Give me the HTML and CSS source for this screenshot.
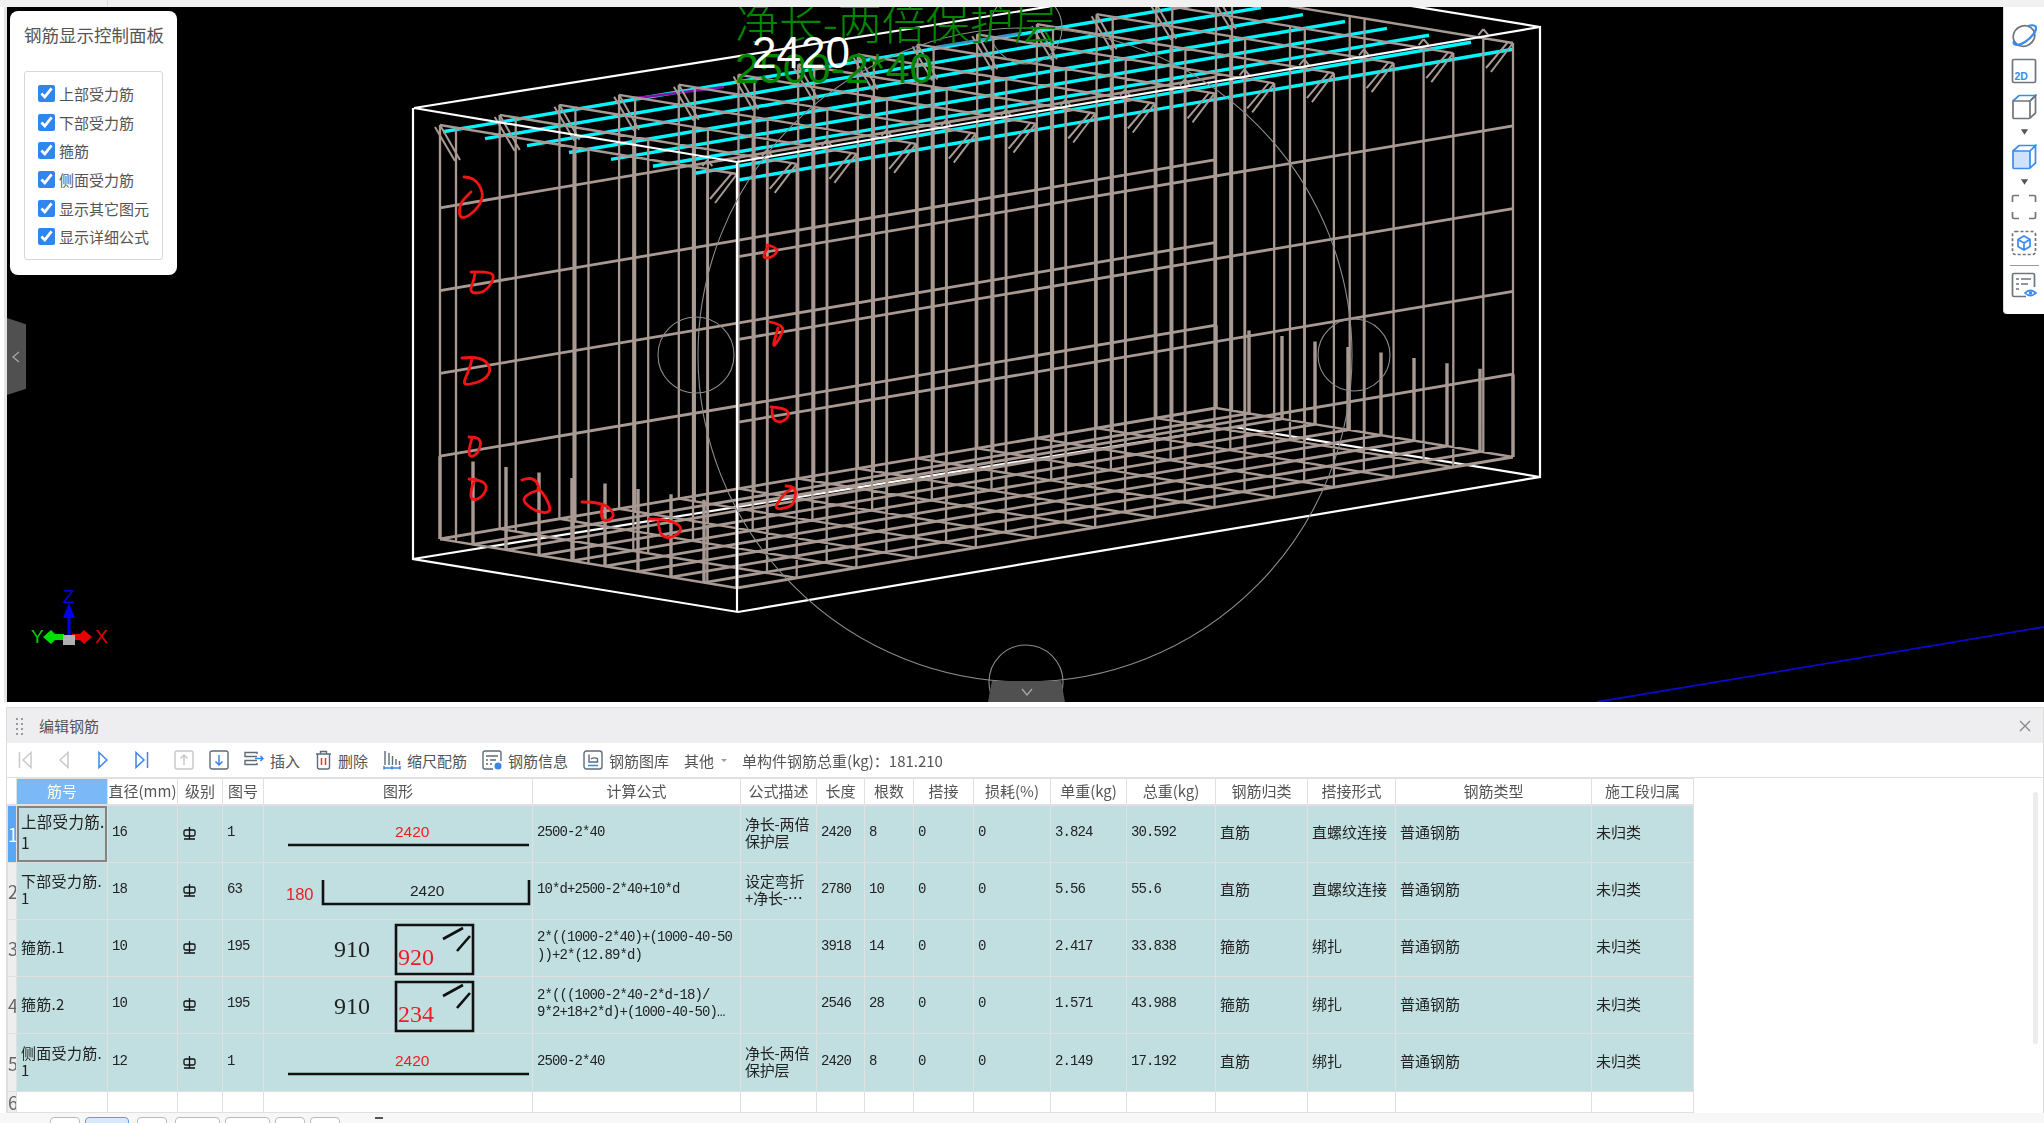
FILE: index.html
```html
<!DOCTYPE html>
<html lang="zh-CN">
<head>
<meta charset="utf-8">
<title>编辑钢筋</title>
<link rel="stylesheet" href="styles.css">
</head>
<body>
<div class="page">
  <div class="top-strip"><div class="top-tab"></div></div>

  <div class="stage">
    <div class="gutter"></div>
    <main class="viewport">
      <svg class="scene" viewBox="7 7 2037 695" width="2037" height="695" aria-label="钢筋三维视图">
        <line class="axis-blue" x1="1597" y1="702" x2="2044" y2="627"/>
        <path class="box-line" d="M414 108 1234 -23M1540 27 1234 -23M413 559 1234 427 1540 477"/>
        <g id="cyan-bars"></g>
        <path class="misc-purple" d="M637 98 724 87"/>
        <path class="misc-blue" d="M936 47 1022 33"/>
        <g id="rebar"></g>
        <path class="box-line" d="M414 108 737 162 1540 27V477L738 612 413 559V108M737 162V612"/>
        <g class="orbit">
          <circle cx="1025" cy="355" r="327"/>
          <circle cx="1026" cy="28" r="36"/>
          <circle cx="696" cy="355" r="38"/>
          <circle cx="1354" cy="355" r="36"/>
          <circle cx="1026" cy="682" r="37"/>
        </g>
        <text class="dim-green" x="735" y="40">净长-两倍保护层</text>
        <text class="dim-green formula-3d" x="735" y="83">2500-2*40</text>
        <text class="dim-white" x="752" y="68">2420</text>
        <g class="scribble">
          <path d="M464 177 474 177 484 193 479 207 466 218 459 217 460 203 471 192"/>
          <path d="M471 272 492 271 494 280 484 293 469 293 474 280 475 272"/>
          <path d="M462 358 480 356 492 368 485 380 468 385 463 383 470 368 472 358"/>
          <path d="M767 245 780 248 772 258 762 258 768 247"/>
          <path d="M770 322 785 325 780 338 772 349 778 328"/>
          <path d="M771 407 785 408 790 415 782 423 773 420 772 410"/>
          <path d="M469 437 481 437 480 450 472 458 468 453 472 438"/>
          <path d="M469 479 482 480 488 488 480 499 470 500 472 485 476 479"/>
          <path d="M522 480 533 476 541 490 531 492 521 500 536 512 552 513 546 497 538 488"/>
          <path d="M582 502 602 502 615 513 610 521 601 520 602 505"/>
          <path d="M649 519 668 519 684 528 673 538 661 537 658 522"/>
          <path d="M786 486 796 486 795 500 791 507 773 510 783 495 792 488"/>
        </g>
        <g class="gizmo">
          <text class="gz-z" x="63" y="603">Z</text>
          <path class="gz-zshaft" d="M69 618V640"/>
          <path class="gz-zcone" d="M69 603 75 618H63Z"/>
          <path class="gz-ycone" d="M43 637 51 630 55 634H64V640H55L51 644Z"/>
          <path class="gz-xcone" d="M92 637 84 630 80 634H72V640H80L84 644Z"/>
          <rect class="gz-core" x="63" y="635" width="12" height="10"/>
          <text class="gz-y" x="31" y="643">Y</text>
          <text class="gz-x" x="95" y="643">X</text>
        </g>
      </svg>

      <section class="control-panel">
        <h2 class="panel-title">钢筋显示控制面板</h2>
        <div class="check-group">
          <label class="check-row"><input type="checkbox" checked>上部受力筋</label>
          <label class="check-row"><input type="checkbox" checked>下部受力筋</label>
          <label class="check-row"><input type="checkbox" checked>箍筋</label>
          <label class="check-row"><input type="checkbox" checked>侧面受力筋</label>
          <label class="check-row"><input type="checkbox" checked>显示其它图元</label>
          <label class="check-row"><input type="checkbox" checked>显示详细公式</label>
        </div>
      </section>

      <div class="handle-left"><svg width="8" height="12" viewBox="0 0 8 12"><path class="chev" d="M7 1 1 6 7 11"/></svg></div>
      <div class="handle-bottom"><svg width="12" height="8" viewBox="0 0 12 8"><path class="chev" d="M1 1 6 7 11 1"/></svg></div>

      <aside class="view-tools">
        <svg class="vt-icon" viewBox="0 0 26 26"><ellipse class="i-gray" cx="13" cy="13" rx="11" ry="10" transform="rotate(-30 13 13)"/><path class="i-blue-thick" d="M3 18C1 23 8 23 14 19S26 8 25 4C24 2 20 2 17 3"/></svg>
        <svg class="vt-icon" viewBox="0 0 26 26"><rect class="i-gray" x="1.500" y="1.500" width="23" height="23" rx="1.500"/><text class="i-2d" x="3.500" y="22">2D</text></svg>
        <svg class="vt-icon" viewBox="0 0 26 26"><path class="i-blue" d="M2 7 8 1.500H24.500L19 7"/><path class="i-gray" d="M2 7H19V23C19 24 18.500 24.500 18 24.500H3C2.500 24.500 2 24 2 23ZM19 7 24.500 1.500V19L19 24"/></svg>
        <svg class="vt-caret" viewBox="0 0 10 6"><path d="M1 0H9L5 6Z"/></svg>
        <svg class="vt-icon" viewBox="0 0 26 26"><path class="i-fill" d="M2 7H19V24.500H3L2 23Z"/><path class="i-blue" d="M2 7 8 1.500H24.500L19 7M2 7H19V23C19 24 18.500 24.500 18 24.500H3C2.500 24.500 2 24 2 23ZM19 7 24.500 1.500V19L19 24"/></svg>
        <svg class="vt-caret" viewBox="0 0 10 6"><path d="M1 0H9L5 6Z"/></svg>
        <svg class="vt-icon" viewBox="0 0 26 26"><path class="i-gray" d="M8 1.500H3Q1.500 1.500 1.500 3V8M18 1.500H23Q24.500 1.500 24.500 3V8M1.500 18V23Q1.500 24.500 3 24.500H8M24.500 18V23Q24.500 24.500 23 24.500H18"/></svg>
        <svg class="vt-icon" viewBox="0 0 26 26"><rect class="i-dash" x="1.500" y="1.500" width="23" height="23" rx="3"/><path class="i-blue" d="M13 6 19 9.500V16.500L13 20 7 16.500V9.500ZM7 9.500 13 13 19 9.500M13 13V20"/></svg>
        <div class="vt-sep"></div>
        <svg class="vt-icon" viewBox="0 0 26 26"><path class="i-gray" d="M15 24.500H3Q1.500 24.500 1.500 23V3Q1.500 1.500 3 1.500H22Q23.500 1.500 23.500 3V15"/><path class="i-gray" d="M5 7H8M10 7H20M5 12H8M10 12H17M5 17H8"/><path class="i-blue" d="M14 21Q19 16 25 21 19 26 14 21Z"/><circle class="i-dot" cx="19.500" cy="21" r="1.800"/></svg>
      </aside>
    </main>
  </div>

  <section class="editor">
    <header class="editor-head">
      <svg class="grip" width="9" height="18" viewBox="0 0 9 18"><path d="M1 1h2v2H1zM6 1h2v2H6zM1 6h2v2H1zM6 6h2v2H6zM1 11h2v2H1zM6 11h2v2H6zM1 16h2v2H1zM6 16h2v2H6z"/></svg>
      <span class="editor-title">编辑钢筋</span>
      <svg class="close" width="12" height="12" viewBox="0 0 12 12"><path d="M1 1 11 11M11 1 1 11"/></svg>
    </header>

    <div class="toolbar">
      <span class="nav-btn"><svg width="14" height="18" viewBox="0 0 14 18"><path class="t-off" d="M1.500 1V17M13 1.500 5 9 13 16.500Z"/></svg></span>
      <span class="nav-btn"><svg width="10" height="18" viewBox="0 0 10 18"><path class="t-off" d="M9 1.500 1 9 9 16.500Z"/></svg></span>
      <span class="nav-btn"><svg width="10" height="18" viewBox="0 0 10 18"><path class="t-on" d="M1 1.500 9 9 1 16.500Z"/></svg></span>
      <span class="nav-btn"><svg width="14" height="18" viewBox="0 0 14 18"><path class="t-on" d="M1 1.500 9 9 1 16.500ZM12.500 1V17"/></svg></span>
      <span class="box-btn box-first"><svg width="20" height="20" viewBox="0 0 20 20"><rect class="t-off" x="1" y="1" width="18" height="18" rx="2"/><path class="t-off" d="M10 15V5M6.500 8.500 10 5 13.500 8.500"/></svg></span>
      <span class="box-btn"><svg width="20" height="20" viewBox="0 0 20 20"><rect class="t-dark" x="1" y="1" width="18" height="18" rx="2"/><path class="t-on" d="M10 5V15M6.500 11.500 10 15 13.500 11.500"/></svg></span>
      <span class="tool tool-first"><svg width="20" height="18" viewBox="0 0 20 18"><path class="t-dark" d="M13 3V1.500H1V5.500H13M13 12V13.500H1V9.500H13"/><path class="t-on" d="M11 7.500H19M16.500 5 19 7.500 16.500 10"/></svg>插入</span>
      <span class="tool"><svg width="17" height="20" viewBox="0 0 17 20"><path class="t-dark" d="M1 4H16M5.500 4V1.500H11.500V4M2.500 4V17Q2.500 19 4.500 19H12.500Q14.500 19 14.500 17V4"/><path class="t-red" d="M6.500 8V15M10.500 8V15"/></svg>删除</span>
      <span class="tool"><svg width="18" height="20" viewBox="0 0 18 20"><path class="t-dark" d="M2 1V15M6 3V15M9.500 6V15M13 9V15M16.500 11V15"/><path class="t-on" d="M1 18H17M1 16V19.500M17 16V19.500M9 16V19.500"/></svg>缩尺配筋</span>
      <span class="tool"><svg width="20" height="20" viewBox="0 0 20 20"><path class="t-dark" d="M11 19H3Q1 19 1 17V3Q1 1 3 1H17Q19 1 19 3V11M4 6H16M4 10H6M8 10H14M4 14H6M8 14H10"/><circle class="t-fill" cx="16" cy="16" r="3.500"/></svg>钢筋信息</span>
      <span class="tool"><svg width="20" height="20" viewBox="0 0 20 20"><rect class="t-dark" x="1" y="1" width="18" height="18" rx="2.500"/><path class="t-dark" d="M6 4.500V12H14.500V9C14.500 7.500 9.500 7.500 8 9"/><path class="t-on" d="M5 15.500H15"/></svg>钢筋图库</span>
      <span class="tool">其他<i class="mini-caret"></i></span>
      <span class="total">单构件钢筋总重(kg)：181.210</span>
    </div>

    <div class="grid-wrap">
      <table class="rebar-table">
        <colgroup>
          <col class="c-no"><col class="c-id"><col class="c-dia"><col class="c-grade"><col class="c-fig"><col class="c-shape"><col class="c-calc"><col class="c-desc"><col class="c-len"><col class="c-qty"><col class="c-lap"><col class="c-loss"><col class="c-unit"><col class="c-sum"><col class="c-cat"><col class="c-join"><col class="c-type"><col class="c-seg">
        </colgroup>
        <thead>
          <tr><th class="corner"></th><th class="sel-head">筋号</th><th>直径(mm)</th><th>级别</th><th>图号</th><th>图形</th><th>计算公式</th><th>公式描述</th><th>长度</th><th>根数</th><th>搭接</th><th>损耗(%)</th><th>单重(kg)</th><th>总重(kg)</th><th>钢筋归类</th><th>搭接形式</th><th>钢筋类型</th><th>施工段归属</th></tr>
        </thead>
        <tbody>
          <tr class="data">
            <td class="no no-active">1</td><td class="id id-active">上部受力筋.<br>1</td><td class="num">16</td>
            <td><svg class="grade" viewBox="0 0 13 13"><rect x="1" y="3" width="11" height="6" rx="1.500"/><path d="M6.500 0V12M1 12H12"/></svg></td>
            <td class="num">1</td>
            <td class="shape"><svg class="fig" viewBox="0 0 270 56"><text class="f-sans f-red" x="131" y="31">2420</text><path class="f-line" d="M24 39H265"/></svg></td>
            <td class="num">2500-2*40</td><td class="desc">净长-两倍<br>保护层</td><td class="num">2420</td><td class="num">8</td><td class="num">0</td><td class="num">0</td><td class="num">3.824</td><td class="num">30.592</td><td>直筋</td><td>直螺纹连接</td><td>普通钢筋</td><td>未归类</td>
          </tr>
          <tr class="data">
            <td class="no">2</td><td class="id">下部受力筋.<br>1</td><td class="num">18</td>
            <td><svg class="grade" viewBox="0 0 13 13"><rect x="1" y="3" width="11" height="6" rx="1.500"/><path d="M6.500 0V12M1 12H12"/></svg></td>
            <td class="num">63</td>
            <td class="shape"><svg class="fig" viewBox="0 0 270 56"><text class="f-sans f-red f-big" x="22" y="37">180</text><path class="f-line" d="M59 17V41H265V17"/><text class="f-sans" x="146" y="33">2420</text></svg></td>
            <td class="num">10*d+2500-2*40+10*d</td><td class="desc">设定弯折<br>+净长-…</td><td class="num">2780</td><td class="num">10</td><td class="num">0</td><td class="num">0</td><td class="num">5.56</td><td class="num">55.6</td><td>直筋</td><td>直螺纹连接</td><td>普通钢筋</td><td>未归类</td>
          </tr>
          <tr class="data">
            <td class="no">3</td><td class="id">箍筋.1</td><td class="num">10</td>
            <td><svg class="grade" viewBox="0 0 13 13"><rect x="1" y="3" width="11" height="6" rx="1.500"/><path d="M6.500 0V12M1 12H12"/></svg></td>
            <td class="num">195</td>
            <td class="shape"><svg class="fig" viewBox="0 0 270 56"><text class="f-serif" x="70" y="37">910</text><path class="f-line" d="M132 5H209V54H132ZM179 19 199 8M193 31 206 16"/><text class="f-serif f-red" x="134" y="45">920</text></svg></td>
            <td class="num">2*((1000-2*40)+(1000-40-50<br>))+2*(12.89*d)</td><td class="desc"></td><td class="num">3918</td><td class="num">14</td><td class="num">0</td><td class="num">0</td><td class="num">2.417</td><td class="num">33.838</td><td>箍筋</td><td>绑扎</td><td>普通钢筋</td><td>未归类</td>
          </tr>
          <tr class="data">
            <td class="no">4</td><td class="id">箍筋.2</td><td class="num">10</td>
            <td><svg class="grade" viewBox="0 0 13 13"><rect x="1" y="3" width="11" height="6" rx="1.500"/><path d="M6.500 0V12M1 12H12"/></svg></td>
            <td class="num">195</td>
            <td class="shape"><svg class="fig" viewBox="0 0 270 56"><text class="f-serif" x="70" y="37">910</text><path class="f-line" d="M132 5H209V54H132ZM179 19 199 8M193 31 206 16"/><text class="f-serif f-red" x="134" y="45">234</text></svg></td>
            <td class="num">2*(((1000-2*40-2*d-18)/<br>9*2+18+2*d)+(1000-40-50)…</td><td class="desc"></td><td class="num">2546</td><td class="num">28</td><td class="num">0</td><td class="num">0</td><td class="num">1.571</td><td class="num">43.988</td><td>箍筋</td><td>绑扎</td><td>普通钢筋</td><td>未归类</td>
          </tr>
          <tr class="data">
            <td class="no">5</td><td class="id">侧面受力筋.<br>1</td><td class="num">12</td>
            <td><svg class="grade" viewBox="0 0 13 13"><rect x="1" y="3" width="11" height="6" rx="1.500"/><path d="M6.500 0V12M1 12H12"/></svg></td>
            <td class="num">1</td>
            <td class="shape"><svg class="fig" viewBox="0 0 270 56"><text class="f-sans f-red" x="131" y="31">2420</text><path class="f-line" d="M24 39H265"/></svg></td>
            <td class="num">2500-2*40</td><td class="desc">净长-两倍<br>保护层</td><td class="num">2420</td><td class="num">8</td><td class="num">0</td><td class="num">0</td><td class="num">2.149</td><td class="num">17.192</td><td>直筋</td><td>绑扎</td><td>普通钢筋</td><td>未归类</td>
          </tr>
          <tr class="blank">
            <td class="no">6</td><td></td><td></td><td></td><td></td><td></td><td></td><td></td><td></td><td></td><td></td><td></td><td></td><td></td><td></td><td></td><td></td><td></td>
          </tr>
        </tbody>
      </table>
      <div class="v-scroll"></div>
    </div>
  </section>

  <nav class="pager">
    <span class="pg pg-s"></span>
    <span class="pg pg-active"></span>
    <span class="pg pg-s pg-wide"></span>
    <span class="pg pg-m pg-wide"></span>
    <span class="pg pg-m"></span>
    <span class="pg pg-s"></span>
    <span class="pg pg-s"></span>
    <i class="pg-mark"></i>
  </nav>
</div>
<script src="wireframe.js"></script>
</body>
</html>
```

FILE: styles.css
```css
* { box-sizing: border-box; }
html, body { margin: 0; padding: 0; background: #fff; }
body { font-family: "Noto Sans CJK SC", "Liberation Sans", sans-serif; color: #333; }

.page {
  width: 2044px;
  height: 1123px;
  overflow: hidden;
  display: flex;
  flex-direction: column;
  filter: blur(0.45px);
}

.top-strip { height: 7px; background: #f1f1f1; flex: none; }
.top-tab { width: 108px; height: 7px; border-right: 1px solid #ddd; }

.stage { display: flex; height: 695px; flex: none; }
.gutter { width: 7px; background: linear-gradient(90deg, #fff 0 4px, #e4e4e4 4px); }
.viewport { position: relative; flex: 1; background: #000; overflow: hidden; }
.scene { display: block; }

.box-line { fill: none; stroke: #fff; stroke-width: 2.200; }
.axis-blue { stroke: #0a0ac8; stroke-width: 1.800; }
.misc-purple { stroke: #8a10a8; stroke-width: 2.600; }
.misc-blue { stroke: #3f8fc8; stroke-width: 2.600; }
.orbit circle { fill: none; stroke: #8c8c8c; stroke-width: 1.100; }
.dim-green { fill: #008600; font-size: 44px; font-family: "Noto Sans CJK SC", sans-serif; font-weight: 300; }
.formula-3d { font-size: 43px; font-family: "Liberation Sans", sans-serif; font-weight: 400; }
.dim-white { fill: #fff; font-size: 44px; font-family: "Liberation Sans", sans-serif; }
.scribble path { fill: none; stroke: #f41414; stroke-width: 2.800; stroke-linejoin: round; stroke-linecap: round; }

.gizmo text { font-size: 19px; font-family: "Liberation Sans", sans-serif; }
.gz-z { fill: #0000e0; }
.gz-y { fill: #00d000; }
.gz-x { fill: #e00000; }
.gz-zshaft { stroke: #0000f0; stroke-width: 3; }
.gz-zcone { fill: #0000f0; }
.gz-ycone { fill: #00e000; }
.gz-xcone { fill: #e80000; }
.gz-core { fill: #b0b0b0; }

.control-panel {
  position: absolute;
  left: 3px;
  top: 4px;
  width: 167px;
  height: 264px;
  background: #fff;
  border-radius: 8px;
  padding: 11px 14px;
}
.panel-title {
  margin: 0 0 24px;
  font-size: 17.500px;
  font-weight: 400;
  line-height: 25px;
  color: #555;
  white-space: nowrap;
}
.check-group {
  width: 139px;
  height: 189px;
  border: 1px solid #d8d8d8;
  border-radius: 3px;
  padding: 7px 0 0 13px;
}
.check-row {
  display: flex;
  align-items: center;
  gap: 4px;
  height: 28.700px;
  font-size: 15px;
  color: #555;
  white-space: nowrap;
}
.check-row input {
  appearance: auto;
  accent-color: #2f86ee;
  width: 17px;
  height: 17px;
  margin: 0;
}

.handle-left {
  position: absolute;
  left: 0;
  top: 311px;
  width: 19px;
  height: 77px;
  background: #505050;
  clip-path: polygon(0 0, 100% 8%, 100% 92%, 0 100%);
  display: flex;
  align-items: center;
  padding-left: 5px;
}
.handle-bottom {
  position: absolute;
  left: 981px;
  top: 674px;
  width: 77px;
  height: 21px;
  background: #505050;
  clip-path: polygon(5% 0, 95% 0, 100% 100%, 0 100%);
  display: flex;
  align-items: center;
  justify-content: center;
}
.chev { fill: none; stroke: #a8a8a8; stroke-width: 1.300; }

.view-tools {
  position: absolute;
  right: 0;
  top: 0;
  width: 41px;
  height: 307px;
  background: #fff;
  border-bottom-left-radius: 4px;
  border-left: 1px solid #ddd;
  display: flex;
  flex-direction: column;
  align-items: center;
  padding-top: 16px;
}
.vt-icon { width: 26px; height: 26px; flex: none; margin-bottom: 10px; }
.vt-icon:first-child { margin-bottom: 9px; }
.vt-caret { width: 9px; height: 6px; fill: #555; margin: -1px 0 9px; flex: none; }
.vt-sep { width: 29px; height: 1px; background: #999; margin: -1px 0 6px; flex: none; }
.i-gray { fill: none; stroke: #70757c; stroke-width: 1.700; }
.i-blue { fill: none; stroke: #3b8bf0; stroke-width: 1.700; }
.i-blue-thick { fill: none; stroke: #3b8bf0; stroke-width: 2.200; }
.i-fill { fill: #cfe2fb; }
.i-dash { fill: none; stroke: #70757c; stroke-width: 1.700; stroke-dasharray: 3 2; }
.i-dot { fill: #3b8bf0; }
.i-2d { fill: #3b8bf0; font: 700 10.500px "Liberation Sans", sans-serif; }

.editor {
  flex: none;
  height: 406px;
  margin: 5px 0 0 6px;
  border: 1px solid #dcdcdc;
  background: #fff;
  display: flex;
  flex-direction: column;
}
.editor-head {
  flex: none;
  height: 35px;
  background: #eeeef0;
  display: flex;
  align-items: center;
  padding: 0 12px 0 8px;
}
.grip { fill: #9a9a9a; }
.editor-title { margin-left: 15px; font-size: 15px; color: #555; }
.close { margin-left: auto; fill: none; stroke: #888; stroke-width: 1.300; }

.toolbar {
  flex: none;
  height: 35px;
  display: flex;
  align-items: center;
  font-size: 15px;
  color: #555;
  white-space: nowrap;
  border-bottom: 1px solid #e2e2e2;
}
.nav-btn, .box-btn { display: flex; align-items: center; justify-content: center; flex: none; }
.nav-btn { width: 39px; }
.nav-btn:first-child { margin-left: -2px; }
.box-btn { width: 35px; }
.box-first { margin-left: 5px; }
.tool { display: inline-flex; align-items: center; gap: 6px; margin-left: 15px; }
.tool-first { margin-left: 8px; }
.t-off { fill: none; stroke: #c9c9c9; stroke-width: 1.500; }
.t-on { fill: none; stroke: #3b86e8; stroke-width: 1.500; }
.t-dark { fill: none; stroke: #5f6b76; stroke-width: 1.400; }
.t-red { fill: none; stroke: #e8342c; stroke-width: 1.500; }
.t-fill { fill: #3b86e8; }
.mini-caret {
  width: 0; height: 0;
  border: 3px solid transparent;
  border-top-color: #9a9a9a;
  border-bottom-width: 0;
  margin-left: 1px;
}
.total { margin-left: 15px; font-size: 15px; }

.grid-wrap { position: relative; flex: 1; background: #fff; }
.v-scroll {
  position: absolute;
  right: 5px;
  top: 14px;
  width: 5px;
  height: 252px;
  border-radius: 3px;
  background: #ececec;
}

.rebar-table {
  width: 1686px;
  table-layout: fixed;
  border-collapse: collapse;
  font-size: 15px;
  line-height: 17px;
  color: #222;
}
.rebar-table td, .rebar-table th {
  border: 1px solid #e0e0e0;
  padding: 0 4px 4px;
  overflow: hidden;
  white-space: nowrap;
}
.rebar-table th {
  height: 26px;
  padding: 0 0 2px;
  font-weight: 400;
  color: #555;
  text-align: center;
  border-bottom-width: 2px;
}
.rebar-table th.corner { border-top: 0; border-left: 0; }
.rebar-table th.sel-head { background: #7ab8f8; color: #fff; }
.c-no { width: 9px; } .c-id { width: 91px; } .c-dia { width: 70px; } .c-grade { width: 45px; }
.c-fig { width: 41px; } .c-shape { width: 269px; } .c-calc { width: 208px; } .c-desc { width: 76px; }
.c-len { width: 48px; } .c-qty { width: 49px; } .c-lap { width: 60px; } .c-loss { width: 77px; }
.c-unit { width: 76px; } .c-sum { width: 89px; } .c-cat { width: 92px; } .c-join { width: 88px; }
.c-type { width: 196px; } .c-seg { width: 102px; }

.data { height: 57.300px; background: #c1dfe1; }
.blank { height: 21px; background: #fff; }
.rebar-table td.no {
  padding: 0;
  background: #eeeeee;
  color: #666;
  font-size: 18px;
  line-height: 1;
}
.rebar-table td.no-active { background: #5ca6f6; color: #fff; }
.rebar-table td.id { letter-spacing: 0.3px; padding-bottom: 3px; }
.rebar-table td.id-active { box-shadow: inset 0 0 0 2px #848484; font-size: 15.500px; line-height: 21px; }
.rebar-table td.num { font-family: "Liberation Mono", monospace; font-size: 14px; letter-spacing: -0.9px; line-height: 17.500px; padding-bottom: 2px; }
.rebar-table td.desc { letter-spacing: -0.2px; padding-bottom: 3px; }
.rebar-table td.shape { padding: 0; }

.grade { display: block; width: 13px; height: 13px; margin: 3px 0 0 1px; fill: none; stroke: #111; stroke-width: 1.300; }
.fig { display: block; width: 270px; height: 56px; }
.f-line { fill: none; stroke: #111; stroke-width: 2.600; }
.f-sans { font: 15.500px "Liberation Sans", sans-serif; fill: #222; }
.f-big { font-size: 16.500px; }
.f-serif { font: 24px "Liberation Serif", serif; fill: #222; }
.f-red { fill: #f01c24; }

.pager {
  flex: 1;
  display: flex;
  align-items: flex-start;
  gap: 5px;
  padding: 4px 0 0 50px;
  background: #f7f7f7;
}
.pg { height: 18px; background: #fff; border: 1px solid #bbb; border-radius: 4px; flex: none; }
.pg-s { width: 30px; }
.pg-m { width: 45px; }
.pg-wide { margin-left: 3px; }
.pg-active { width: 44px; background: #d9e9fb; border-color: #5b9fe8; }
.pg-mark { width: 8px; height: 2px; background: #555; margin-left: 30px; }
```

FILE: wireframe.js
```javascript
// Rebar cage drawn in the parallel projection of the 3D view.
(function () {
  var NS = "http://www.w3.org/2000/svg";
  function P(u, v, w) {
    return [737 + 776 * u - 297 * v, 588 - 131 * u - 49 * v - 414 * w];
  }
  function seg(a, b) {
    return "M" + a[0].toFixed(1) + " " + a[1].toFixed(1) + "L" + b[0].toFixed(1) + " " + b[1].toFixed(1);
  }
  function rect(u, v0, v1) {
    return seg(P(u, v0, 0), P(u, v1, 0)) + seg(P(u, v1, 0), P(u, v1, 1)) +
           seg(P(u, v1, 1), P(u, v0, 1)) + seg(P(u, v0, 1), P(u, v0, 0));
  }
  function add(group, d, color, width) {
    var p = document.createElementNS(NS, "path");
    p.setAttribute("d", d);
    p.setAttribute("fill", "none");
    p.setAttribute("stroke", color);
    p.setAttribute("stroke-width", width);
    document.getElementById(group).appendChild(p);
  }
  var BROWN = "#a89a93", stirrups = "", hooks = "", mains = "", stubs = "", cyan = "";

  for (var k = 0; k < 14; k++) {
    var u = k / 13;
    stirrups += rect(u, 0, 1) + rect(u, 0.1, 0.5) + rect(u, 0.55, 0.946);
    var near = P(u, 0, 1), back = P(u, 1, 1), mid = P(u, 0.1, 1);
    hooks += seg(near, [near[0] - 22, near[1] + 29]) + seg([near[0] - 5, near[1] - 1], [near[0] - 27, near[1] + 25]);
    hooks += seg(back, [back[0] + 20, back[1] + 35]) + seg([back[0] - 5, back[1] + 2], [back[0] + 15, back[1] + 36]);
    hooks += seg([mid[0] - 5, mid[1] - 3], [mid[0], mid[1] - 9]) + seg([mid[0], mid[1] - 9], [mid[0] + 5, mid[1] - 3]);
  }
  for (var j = 0; j < 10; j++) {
    var v = j / 9;
    mains += seg(P(0, v, 0), P(1, v, 0));
    stubs += seg(P(0, v, 0), P(0, v, 0.2)) + seg(P(1, v, 0), P(1, v, 0.2));
  }
  [0.8, 0.6, 0.4, 0.2].forEach(function (w) {
    mains += seg(P(0, 0, w), P(1, 0, w)) + seg(P(0, 1, w), P(1, 1, w));
  });
  for (var c = 0; c < 8; c++) {
    cyan += seg(P(0, c / 7 * 0.99, 0.985), P(1, c / 7 * 0.99, 0.985));
  }
  add("cyan-bars", cyan, "#00f6ff", 3.4);
  add("rebar", stirrups, BROWN, 2.3);
  add("rebar", mains, BROWN, 2.8);
  add("rebar", stubs, BROWN, 3.4);
  add("rebar", hooks, BROWN, 2);

  // Hand-drawn red marks: round the pen strokes through the midpoints of their points.
  document.querySelectorAll(".scribble path").forEach(function (p) {
    var n = p.getAttribute("d").slice(1).trim().split(/\s+/).map(Number), pts = [];
    for (var i = 0; i < n.length; i += 2) pts.push([n[i], n[i + 1]]);
    var d = "M" + pts[0].join(" ");
    for (var q = 1; q < pts.length - 1; q++) {
      d += "Q" + pts[q].join(" ") + " " + (pts[q][0] + pts[q + 1][0]) / 2 + " " + (pts[q][1] + pts[q + 1][1]) / 2;
    }
    d += "L" + pts[pts.length - 1].join(" ");
    p.setAttribute("d", d);
  });
})();
```
